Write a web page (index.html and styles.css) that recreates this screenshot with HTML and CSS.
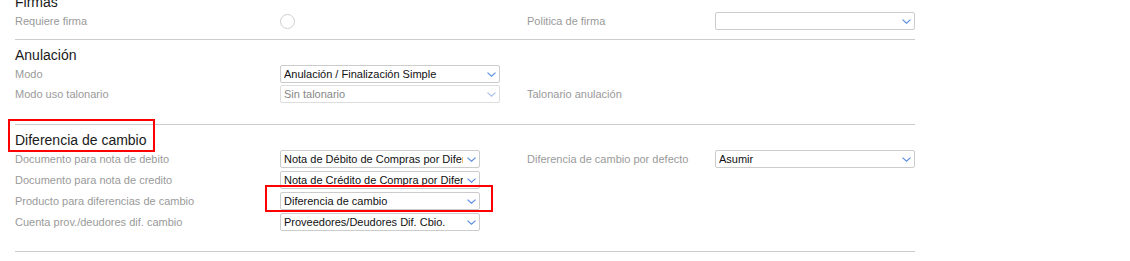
FILE: index.html
```html
<!DOCTYPE html>
<html>
<head>
    <title>Configuración</title>
    <link rel="stylesheet" href="styles.css">
</head>
<body>
<div class="page">
    <div class="form">
        <section class="group group-first">
            <h3 class="group-title">Firmas</h3>
            <div class="rows">
                <div class="row">
                    <span class="lbl">Requiere firma</span>
                    <div class="cell"><span class="radio"></span></div>
                    <span class="lbl">Politica de firma</span>
                    <div class="cell">
                        <div class="select w200">
                            <span class="select-text"></span>
                            <svg class="chev" width="9" height="5" viewBox="0 0 9 5"><polyline points="0.5,0.6 4.5,4.2 8.5,0.6"/></svg>
                        </div>
                    </div>
                </div>
            </div>
        </section>

        <section class="group">
            <h3 class="group-title">Anulación</h3>
            <div class="rows rows-tight">
                <div class="row">
                    <span class="lbl">Modo</span>
                    <div class="cell">
                        <div class="select w220">
                            <span class="select-text">Anulación / Finalización Simple</span>
                            <svg class="chev" width="9" height="5" viewBox="0 0 9 5"><polyline points="0.5,0.6 4.5,4.2 8.5,0.6"/></svg>
                        </div>
                    </div>
                    <span class="lbl"></span>
                    <div class="cell"></div>
                </div>
                <div class="row">
                    <span class="lbl">Modo uso talonario</span>
                    <div class="cell">
                        <div class="select w220 disabled">
                            <span class="select-text">Sin talonario</span>
                            <svg class="chev" width="9" height="5" viewBox="0 0 9 5"><polyline points="0.5,0.6 4.5,4.2 8.5,0.6"/></svg>
                        </div>
                    </div>
                    <span class="lbl">Talonario anulación</span>
                    <div class="cell"></div>
                </div>
            </div>
        </section>

        <section class="group group-last">
            <h3 class="group-title">Diferencia de cambio</h3>
            <div class="rows">
                <div class="row">
                    <span class="lbl">Documento para nota de debito</span>
                    <div class="cell">
                        <div class="select w200">
                            <span class="select-text">Nota de Débito de Compras por Diferencia de cambio</span>
                            <svg class="chev" width="9" height="5" viewBox="0 0 9 5"><polyline points="0.5,0.6 4.5,4.2 8.5,0.6"/></svg>
                        </div>
                    </div>
                    <span class="lbl">Diferencia de cambio por defecto</span>
                    <div class="cell">
                        <div class="select w200">
                            <span class="select-text">Asumir</span>
                            <svg class="chev" width="9" height="5" viewBox="0 0 9 5"><polyline points="0.5,0.6 4.5,4.2 8.5,0.6"/></svg>
                        </div>
                    </div>
                </div>
                <div class="row">
                    <span class="lbl">Documento para nota de credito</span>
                    <div class="cell">
                        <div class="select w200">
                            <span class="select-text">Nota de Crédito de Compra por Diferencia de cambio</span>
                            <svg class="chev" width="9" height="5" viewBox="0 0 9 5"><polyline points="0.5,0.6 4.5,4.2 8.5,0.6"/></svg>
                        </div>
                    </div>
                    <span class="lbl"></span>
                    <div class="cell"></div>
                </div>
                <div class="row">
                    <span class="lbl">Producto para diferencias de cambio</span>
                    <div class="cell">
                        <div class="select w200">
                            <span class="select-text">Diferencia de cambio</span>
                            <svg class="chev" width="9" height="5" viewBox="0 0 9 5"><polyline points="0.5,0.6 4.5,4.2 8.5,0.6"/></svg>
                        </div>
                    </div>
                    <span class="lbl"></span>
                    <div class="cell"></div>
                </div>
                <div class="row">
                    <span class="lbl">Cuenta prov./deudores dif. cambio</span>
                    <div class="cell">
                        <div class="select w200">
                            <span class="select-text">Proveedores/Deudores Dif. Cbio.</span>
                            <svg class="chev" width="9" height="5" viewBox="0 0 9 5"><polyline points="0.5,0.6 4.5,4.2 8.5,0.6"/></svg>
                        </div>
                    </div>
                    <span class="lbl"></span>
                    <div class="cell"></div>
                </div>
            </div>
        </section>
    </div>

    <!-- annotation boxes drawn over the form -->
    <div class="mark mark-title"></div>
    <div class="mark mark-field"></div>
</div>
</body>
</html>
```

FILE: styles.css
```css
body {
    margin: 0;
    background: #ffffff;
    font-family: 'Liberation Sans', Arial, sans-serif;
    overflow: hidden;
}

.page {
    position: relative;
    display: flow-root;
    height: 261px;
}

.form {
    width: 900px;
    margin-left: 15px;
}

.group {
    padding: 7px 0 21px 0;
    border-bottom: 1px solid #cccccc;
}

.group-first {
    margin-top: -6px;
    padding-top: 0;
    padding-bottom: 9px;
}

.group-last {
    padding-bottom: 20px;
}

.group-title {
    margin: 0 0 2px 0;
    font-size: 14px;
    line-height: 16px;
    font-weight: normal;
    color: #1a1a1a;
}

.rows {
    display: flex;
    flex-direction: column;
    gap: 3px;
}

.rows-tight {
    gap: 2px;
}

.row {
    display: grid;
    grid-template-columns: 265px 247px 188px 200px;
    align-items: center;
    height: 18px;
}

.lbl {
    font-size: 11px;
    color: #9a9a9a;
    white-space: nowrap;
}

.cell {
    display: flex;
    align-items: center;
}

.radio {
    width: 15px;
    height: 15px;
    box-sizing: border-box;
    border: 1px solid #cfcfcf;
    border-radius: 50%;
    margin-top: 1px;
}

.select {
    display: flex;
    align-items: center;
    height: 18px;
    box-sizing: border-box;
    border: 1px solid #cccccc;
    border-radius: 2px;
    background: #ffffff;
    padding-left: 3px;
}

.w200 {
    width: 200px;
}

.w220 {
    width: 220px;
}

.select-text {
    flex: 1;
    overflow: hidden;
    white-space: nowrap;
    font-size: 11px;
    line-height: 16px;
    color: #111111;
}

.chev {
    flex: none;
    margin: 1px 3px 0 4px;
    fill: none;
    stroke: #5b8de0;
    stroke-width: 1.2;
}

.disabled {
    border-color: #dddddd;
}

.disabled .select-text {
    color: #888888;
}

.disabled .chev {
    stroke: #a8bfe8;
}

.mark {
    position: absolute;
    box-sizing: border-box;
    border: 2px solid #ff0000;
}

.mark-title {
    left: 8px;
    top: 119px;
    width: 147px;
    height: 33px;
}

.mark-field {
    left: 265px;
    top: 185px;
    width: 228px;
    height: 27px;
}
```
